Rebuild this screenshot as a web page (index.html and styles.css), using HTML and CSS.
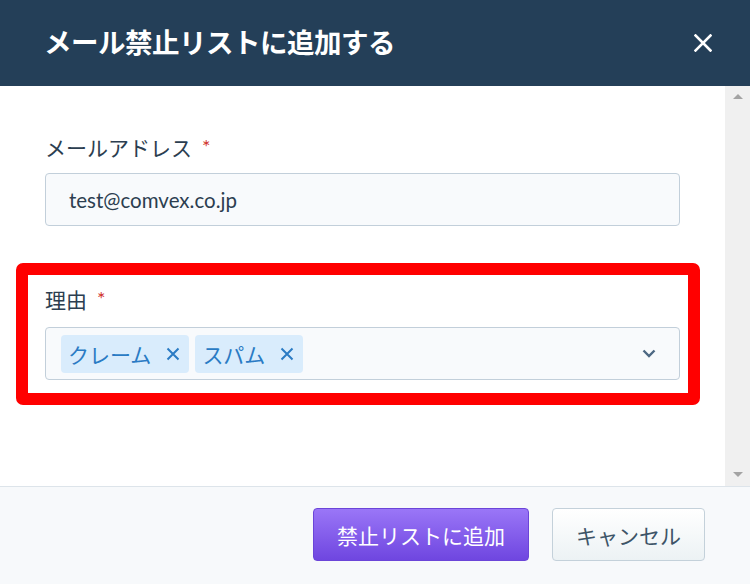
FILE: index.html
```html
<!DOCTYPE html>
<html lang="ja">
<head>
  <meta charset="UTF-8">
  <meta name="viewport" content="width=device-width, initial-scale=1.0">
  <title>メール禁止リストに追加する</title>
  <link rel="stylesheet" href="styles.css">
</head>
<body>
  <div class="Modal">
    <div class="modalHeader">
      <h1 class="modalTitle">メール禁止リストに追加する</h1>
      <svg class="closeIcon" width="18" height="18" viewBox="0 0 18 18">
        <path d="M1.5 1.5 L16.5 16.5 M16.5 1.5 L1.5 16.5" stroke="#ffffff" stroke-width="2.6" stroke-linecap="square" fill="none"/>
      </svg>
    </div>

    <div class="modalBody">
      <div class="modalContent">
        <div class="formGroup">
          <label class="fieldLabel">メールアドレス<span class="required">*</span></label>
          <div class="textInput">test@comvex.co.jp</div>
        </div>

        <div class="formGroup highlightBox">
          <label class="fieldLabel">理由<span class="required">*</span></label>
          <div class="selectInput">
            <div class="tagList">
              <span class="tag">クレーム
                <svg class="tagRemove" width="14" height="14" viewBox="0 0 14 14">
                  <path d="M1.5 1.5 L12.5 12.5 M12.5 1.5 L1.5 12.5" stroke="#2a7bc4" stroke-width="2" fill="none"/>
                </svg>
              </span>
              <span class="tag">スパム
                <svg class="tagRemove" width="14" height="14" viewBox="0 0 14 14">
                  <path d="M1.5 1.5 L12.5 12.5 M12.5 1.5 L1.5 12.5" stroke="#2a7bc4" stroke-width="2" fill="none"/>
                </svg>
              </span>
            </div>
            <svg class="chevron" width="14" height="9" viewBox="0 0 14 9">
              <path d="M1.5 1.5 L7 7 L12.5 1.5" stroke="#4d6883" stroke-width="2.4" fill="none"/>
            </svg>
          </div>
        </div>
      </div>

      <div class="scrollTrack">
        <span class="arrowUp"></span>
        <span class="arrowDown"></span>
      </div>
    </div>

    <div class="modalFooter">
      <button class="btnPrimary" type="button">禁止リストに追加</button>
      <button class="btnSecondary" type="button">キャンセル</button>
    </div>
  </div>
</body>
</html>
```

FILE: styles.css
```css
body{
  margin: 0;
  font-family: Lato, "Noto Sans CJK JP", sans-serif;
  background-color: #ffffff;
}
.Modal{
  width: 750px;
  height: 584px;
  display: flex;
  flex-direction: column;
}
.modalHeader{
  height: 86px;
  flex: none;
  box-sizing: border-box;
  background-color: #243f58;
  display: flex;
  align-items: center;
  justify-content: space-between;
  padding: 0 38px 0 44px;
}
.modalTitle{
  margin: 0;
  color: #ffffff;
  font-size: 27.5px;
  font-weight: 700;
  line-height: 1;
  letter-spacing: -0.5px;
}
.closeIcon{
  display: block;
}
.modalBody{
  flex: 1;
  display: flex;
  min-height: 0;
}
.modalContent{
  flex: 1;
  padding: 48px 45px 0 45px;
}
.fieldLabel{
  display: block;
  height: 28px;
  font-size: 21px;
  line-height: 28px;
  color: #2c3e50;
  margin-bottom: 11px;
}
.required{
  color: #d0312d;
  font-size: 20px;
  line-height: 1;
  margin-left: 10px;
  vertical-align: 2px;
}
.textInput{
  height: 51px;
  border: 1px solid #c2cfda;
  border-radius: 4px;
  background-color: #f8fafc;
  padding-left: 23px;
  display: flex;
  align-items: center;
  font-size: 20.5px;
  color: #2c3e50;
}
.highlightBox{
  margin: 37px -20px 0 -29px;
  border: 12px solid #ff0000;
  border-radius: 7px;
  padding: 11px 8px 13px 17px;
}
.highlightBox .fieldLabel{
  margin-bottom: 13px;
}
.selectInput{
  height: 51px;
  border: 1px solid #c2cfda;
  border-radius: 4px;
  background-color: #f8fafc;
  display: flex;
  align-items: center;
  justify-content: space-between;
  padding: 0 23px 0 15px;
}
.tagList{
  display: flex;
  gap: 6px;
}
.tag{
  height: 38px;
  display: flex;
  align-items: center;
  background-color: #d9ecfc;
  color: #2a7bc4;
  border-radius: 4px;
  padding: 0 9px 0 7px;
  font-size: 21px;
}
.tagRemove{
  display: block;
  margin-left: 15px;
}
.chevron{
  display: block;
}
.scrollTrack{
  width: 25px;
  flex: none;
  background-color: #f0f0f0;
  display: flex;
  flex-direction: column;
  justify-content: space-between;
  align-items: center;
  padding: 8px 0 9px 0;
}
.arrowUp{
  width: 0;
  height: 0;
  border-left: 5px solid transparent;
  border-right: 5px solid transparent;
  border-bottom: 5px solid #a3a3a3;
}
.arrowDown{
  width: 0;
  height: 0;
  border-left: 5px solid transparent;
  border-right: 5px solid transparent;
  border-top: 5px solid #a3a3a3;
}
.modalFooter{
  height: 98px;
  flex: none;
  box-sizing: border-box;
  border-top: 1px solid #dde4ea;
  background-color: #f7f9fb;
  display: flex;
  justify-content: flex-end;
  align-items: center;
  gap: 23px;
  padding: 0 45px 2px 0;
}
.btnPrimary{
  width: 216px;
  height: 53px;
  border: 1px solid #6b45d8;
  border-radius: 4px;
  background: linear-gradient(#9a76f7, #6f46e0);
  color: #ffffff;
  font-family: inherit;
  font-size: 21px;
}
.btnSecondary{
  width: 153px;
  height: 53px;
  border: 1px solid #c4d1da;
  border-radius: 4px;
  background: linear-gradient(#ffffff, #ecf2f4);
  color: #3d5467;
  font-family: inherit;
  font-size: 21px;
}
```
